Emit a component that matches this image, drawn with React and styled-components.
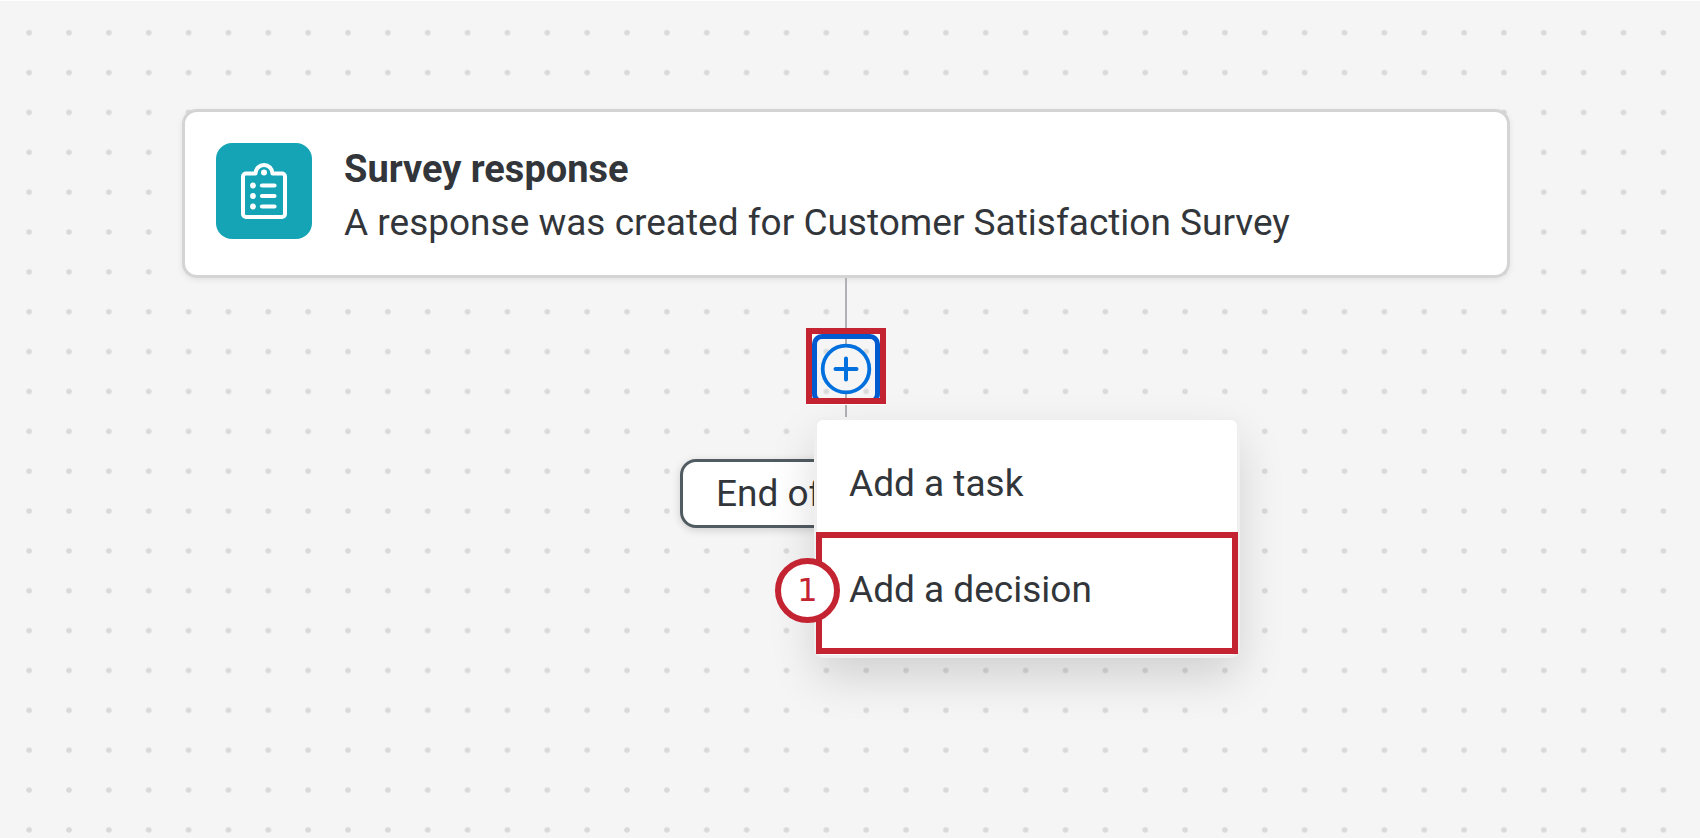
import styled, { createGlobalStyle } from 'styled-components'

const colors = {
  canvas: '#f5f5f5',
  dot: '#d9d9d9',
  text: '#32363a',
  border: '#d4d4d4',
  line: '#b1b1b5',
  teal: '#14a4b6',
  focus: '#005bd0',
  icon: '#0070de',
  highlight: '#c42331',
  pill: '#515b62',
}

const GlobalStyle = createGlobalStyle`
  * {
    box-sizing: border-box;
  }
  body {
    margin: 0;
    font-family: Roboto, 'Liberation Sans', sans-serif;
    font-size: 37px;
    line-height: 53px;
    color: ${colors.text};
  }
`

const Canvas = styled.main`
  position: relative;
  min-height: 100vh;
  padding: 108px 190px 40px 182px;
  border-top: 1px solid #fff;
  background: ${colors.canvas};
  overflow: hidden;
`

const DotsSvg = styled.svg`
  position: absolute;
  inset: 0;
  width: 100%;
  height: 100%;
`

const Flow = styled.div`
  position: relative;
  display: flex;
  flex-direction: column;
  align-items: center;
`

const Card = styled.section`
  display: flex;
  gap: 32px;
  width: 100%;
  padding: 31px 31px 26px;
  border: 3px solid ${colors.border};
  border-radius: 15px;
  background: #fff;
  box-shadow: 0 2px 6px rgba(0, 0, 0, 0.08);
`

const CardIcon = styled.div`
  flex: none;
  width: 96px;
  height: 96px;
  border-radius: 16px;
  background: ${colors.teal};
`

const Title = styled.h2`
  margin: 0;
  font-size: 38px;
  font-weight: 700;
`

const Description = styled.p`
  margin: 0;
`

const Connector = styled.div`
  width: 2px;
  height: ${({ $length }) => $length}px;
  background: ${colors.line};
`

const AddStep = styled.div`
  position: relative;
  z-index: 1;
`

const Frame = styled.div`
  width: 80px;
  height: 76px;
  border: 6px solid ${colors.highlight};
  box-shadow: 0 1px 0 #fff;
  overflow: hidden;
`

const AddButton = styled.button`
  display: block;
  width: 68px;
  height: 70px;
  padding: 0;
  border: 5px solid ${colors.focus};
  border-radius: 10px;
  background: transparent;
  box-shadow: 0 0 0 8px #fff;
  cursor: pointer;

  svg {
    display: block;
  }
`

const EndNode = styled.div`
  width: 332px;
  padding: 5px 33px;
  border: 3px solid ${colors.pill};
  border-radius: 16px;
  background: #fff;
  box-shadow: 0 2px 8px rgba(0, 0, 0, 0.16);
  white-space: nowrap;
`

const Menu = styled.ul`
  position: absolute;
  top: 92px;
  left: 11px;
  width: 420px;
  margin: 0;
  padding: 0 0 1px;
  border-radius: 6px;
  background: #fff;
  box-shadow:
    0 0 0 3px #efefef,
    0 20px 48px rgba(0, 0, 0, 0.16);
  list-style: none;
`

const MenuItem = styled.li`
  position: relative;
  margin: ${({ $marked }) => ($marked ? '0 -1px' : '0')};
  border: ${({ $marked }) =>
    $marked ? `6px solid ${colors.highlight}` : 'none'};
`

const MenuButton = styled.button`
  display: block;
  width: 100%;
  padding: ${({ $marked }) => ($marked ? '25px 27px 32px' : '37px 32px 22px')};
  border: none;
  background: transparent;
  color: inherit;
  font: inherit;
  text-align: left;
  cursor: pointer;
`

const Badge = styled.span`
  position: absolute;
  top: 20px;
  left: -47px;
  display: flex;
  align-items: center;
  justify-content: center;
  width: 65px;
  height: 65px;
  border: 6px solid ${colors.highlight};
  border-radius: 50%;
  background: #fff;
  color: ${colors.highlight};
  font-family: 'DejaVu Sans', sans-serif;
  font-size: 32px;
`

const actions = [
  { label: 'Add a task' },
  { label: 'Add a decision', step: 1 },
]

// Grid of 20 units, drawn at the zoom level of the canvas
function Dots() {
  return (
    <DotsSvg aria-hidden="true">
      <defs>
        <pattern
          id="dots"
          width="20"
          height="20"
          patternUnits="userSpaceOnUse"
          patternTransform="translate(9.2 11.8) scale(1.993)"
        >
          <circle cx="10" cy="10" r="1.4" fill={colors.dot} />
        </pattern>
      </defs>
      <rect width="100%" height="100%" fill="url(#dots)" />
    </DotsSvg>
  )
}

function ClipboardIcon() {
  return (
    <svg width="96" height="96" viewBox="0 0 96 96" fill="none" stroke="#fff" aria-hidden="true">
      <path
        d="M30 30.5h9.5a8.5 8.5 0 0 1 17 0H66a3 3 0 0 1 3 3v37.5a3 3 0 0 1-3 3H30a3 3 0 0 1-3-3V33.5a3 3 0 0 1 3-3z"
        strokeWidth="4"
        strokeLinejoin="round"
      />
      <circle cx="48" cy="29.5" r="3" fill="#fff" stroke="none" />
      {[42.5, 53, 63.5].map((y) => (
        <g key={y}>
          <circle cx="37" cy={y} r="2.9" fill="#fff" stroke="none" />
          <path d={`M46 ${y}h12.5`} strokeWidth="4.2" strokeLinecap="round" />
        </g>
      ))}
    </svg>
  )
}

function PlusIcon() {
  return (
    <svg width="58" height="60" viewBox="0 0 58 60" fill="none" aria-hidden="true">
      <path d="M29 0v60" stroke={colors.line} strokeWidth="2" />
      <circle cx="29" cy="30" r="23.3" fill={colors.canvas} stroke={colors.icon} strokeWidth="3.8" />
      <path d="M29 19.5v21M18.5 30h21" stroke={colors.icon} strokeWidth="4" strokeLinecap="round" />
    </svg>
  )
}

function App() {
  return (
    <Canvas>
      <GlobalStyle />
      <Dots />
      <Flow>
        <Card>
          <CardIcon>
            <ClipboardIcon />
          </CardIcon>
          <div>
            <Title>Survey response</Title>
            <Description>
              A response was created for Customer Satisfaction Survey
            </Description>
          </div>
        </Card>
        <Connector $length={50} />
        <AddStep>
          <Frame>
            <AddButton type="button" aria-label="Add a step">
              <PlusIcon />
            </AddButton>
          </Frame>
          <Menu>
            {actions.map(({ label, step }) => (
              <MenuItem key={label} $marked={Boolean(step)}>
                <MenuButton type="button" $marked={Boolean(step)}>
                  {label}
                </MenuButton>
                {step && <Badge>{step}</Badge>}
              </MenuItem>
            ))}
          </Menu>
        </AddStep>
        <Connector $length={55} />
        <EndNode>End of</EndNode>
      </Flow>
    </Canvas>
  )
}

export default App
